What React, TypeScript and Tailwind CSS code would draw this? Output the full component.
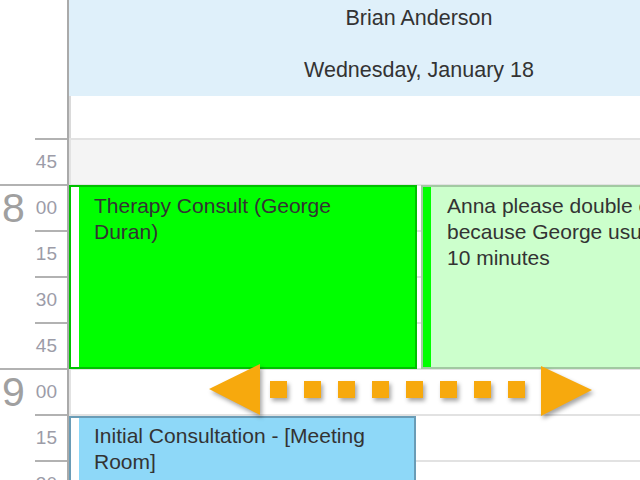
import React from 'react';

type Slot = { hour?: string; min: string; offHours?: boolean };

const slots: Slot[] = [
  { min: '45', offHours: true },
  { hour: '8', min: '00' },
  { min: '15' },
  { min: '30' },
  { min: '45' },
  { hour: '9', min: '00' },
  { min: '15' },
  { min: '30' },
];

const TimeRuler: React.FC = () => (
  <div className="w-[69px] shrink-0 border-r-2 border-[#aaaaaa] flex flex-col">
    <div className="h-[138px] shrink-0" />
    {slots.map((s, i) =>
      s.hour ? (
        <div key={i} className="h-[46px] shrink-0 border-t-2 border-[#b2b2b2] flex">
          <span className="w-[35px] pl-[2px] text-[41px] leading-[44px] text-[#a0a0a0]">{s.hour}</span>
          <span className="flex-1 text-right pr-[10px] text-[19px] leading-[44px] text-[#9c9ca8]">{s.min}</span>
        </div>
      ) : (
        <div key={i} className="h-[46px] shrink-0 pl-[35px]">
          <div className="h-full border-t-2 border-[#b2b2b2] text-right pr-[10px] text-[19px] leading-[44px] text-[#9c9ca8]">
            {s.min}
          </div>
        </div>
      )
    )}
  </div>
);

interface EventProps {
  className: string;
  border: string;
  fill: string;
  strip: string;
  pad: string;
  children: React.ReactNode;
}

const Appointment: React.FC<EventProps> = ({ className, border, fill, strip, pad, children }) => (
  <div className={`absolute flex border-2 ${border} ${fill} ${className}`}>
    <div className={`w-[8px] shrink-0 ${strip}`} />
    <div className={`flex-1 text-[21px] leading-[26px] text-[#333333] ${pad}`}>{children}</div>
  </div>
);

const DragArrow: React.FC = () => (
  <svg
    className="absolute left-[200px] top-[355px] w-[400px] h-[70px] pointer-events-none drop-shadow-[2px_3px_2px_rgba(0,0,0,0.35)]"
    viewBox="0 0 400 70"
  >
    <polygon points="9,34 60,9 60,60" fill="#f7a90d" />
    <polygon points="392,35 341,11 341,61" fill="#f7a90d" />
    {[0, 1, 2, 3, 4, 5, 6, 7].map((k) => (
      <rect key={k} x={70 + 34 * k} y={26} width={17} height={17} fill="#f7a90d" />
    ))}
  </svg>
);

export default function App() {
  return (
    <div className="relative w-[640px] h-[480px] overflow-hidden bg-white flex font-['Liberation_Sans',Arial,sans-serif]">
      <TimeRuler />

      <div className="relative w-[700px] shrink-0 flex flex-col">
        <div className="h-[96px] shrink-0 bg-[#dff0fa] flex flex-col items-center pt-[5px] gap-[26px] text-[21.5px] leading-[26px] text-[#333333]">
          <div>Brian Anderson</div>
          <div>Wednesday, January 18</div>
        </div>
        <div className="h-[42px] shrink-0 border-l-2 border-[#dadada]" />
        {slots.map((s, i) => (
          <div
            key={i}
            className={`h-[46px] shrink-0 border-t-2 border-l-2 border-[#e2e2e2] ${s.offHours ? 'bg-[#f4f4f4]' : 'bg-white'}`}
          />
        ))}

        <Appointment
          className="left-0 top-[185px] w-[348px] h-[184px]"
          border="border-[#00c000]"
          fill="bg-[#00ff00]"
          strip="bg-white"
          pad="pl-[15px] pr-[30px] pt-[6px]"
        >
          Therapy Consult (George Duran)
        </Appointment>

        <Appointment
          className="left-[352px] top-[185px] w-[348px] h-[184px]"
          border="border-[#a2c9a2]"
          fill="bg-[#ccffcc]"
          strip="bg-[#00ff00]"
          pad="pl-[16px] pt-[6px] whitespace-nowrap"
        >
          Anna please double check
          <br />
          because George usually comes
          <br />
          10 minutes
        </Appointment>

        <Appointment
          className="left-0 top-[416px] w-[347px] h-[140px]"
          border="border-[#6a9cb6]"
          fill="bg-[#8ed8f8]"
          strip="bg-white"
          pad="pl-[15px] pr-[30px] pt-[5px]"
        >
          Initial Consultation - [Meeting Room]
        </Appointment>
      </div>

      <DragArrow />
    </div>
  );
}
